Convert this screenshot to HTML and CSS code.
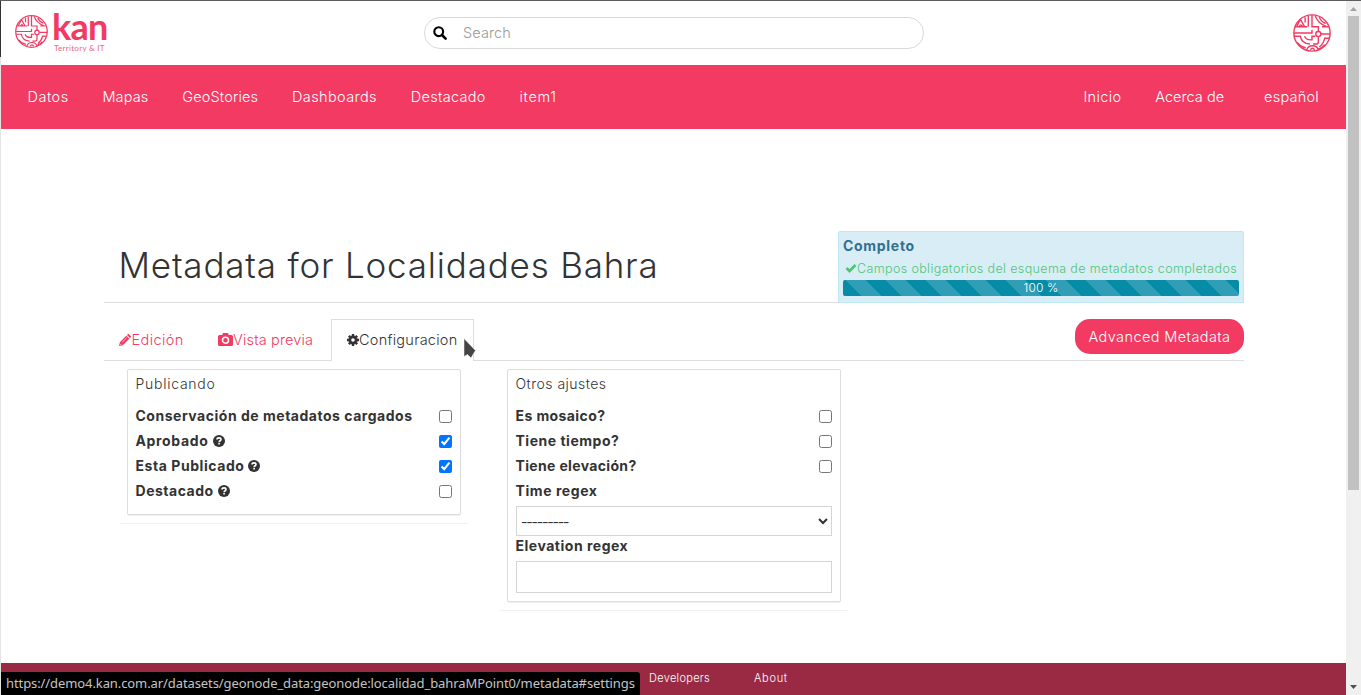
FILE: index.html
```
<!DOCTYPE html>
<html lang="es">
<head>
<meta charset="utf-8">
<title>Metadata for Localidades Bahra</title>
<link rel="stylesheet" href="styles.css">
</head>
<body>
<svg class="defs" width="0" height="0">
  <symbol id="emblem" viewBox="0 0 36 36">
    <g fill="none" stroke="#f23a62" stroke-width="1.350">
      <circle cx="18" cy="18" r="17.200"/>
      <path d="M2 12h11.500M7 5l-3.500 7M7 5l4 7M6 12q1.500-3 3 0M11.500 3v5M14.500 2v10M18 1v11h6v4.500M21 1.500q2 7 11 10.500M25 3q1 4 6 6M27.500 12h6M1 18h17v-3M1 21h6q1 7 9 7.500M4 27q3 4 8 5M11 21q1 3.500 6 3.500h1V21h3M24 21.500v5q0 2-2 2h-3M26.500 19H35M34 23h-4q-1 5-5 8M30 29q-2 3-6 4M13 34q1-4 5.500-4T24 34M16.500 34q2-3 4 0"/>
      <circle cx="24" cy="19" r="2.400" fill="#fff"/>
    </g>
  </symbol>
  <symbol id="help" viewBox="0 0 12 12">
    <circle cx="6" cy="6" r="6" fill="#333"/>
    <path d="M4 4.500C4.100 2.300 8 2.300 8 4.500 8 5.800 6.100 5.700 6.100 7.200M6.100 8.100v1.500" fill="none" stroke="#fff" stroke-width="1.600"/>
  </symbol>
</svg>
<div class="page">
  <header class="top">
    <div class="brand">
      <svg class="brand-icon"><use href="#emblem"/></svg>
      <div class="brand-text"><span class="brand-name">kan</span><span class="brand-sub">Territory &amp; IT</span></div>
    </div>
    <div class="search">
      <svg width="14" height="14" viewBox="0 0 14 14"><circle cx="5.700" cy="5.700" r="4.400" fill="none" stroke="#000" stroke-width="2.100"/><path d="M9 9l3.600 3.600" stroke="#000" stroke-width="2.600" stroke-linecap="round"/></svg>
      <span>Search</span>
    </div>
    <svg class="avatar"><use href="#emblem"/></svg>
  </header>
  <nav class="nav">
    <a class="n-datos">Datos</a><a class="n-mapas">Mapas</a><a class="n-geo">GeoStories</a><a class="n-dash">Dashboards</a><a class="n-dest">Destacado</a><a class="n-item">item1</a>
    <a class="n-inicio">Inicio</a><a class="n-acerca">Acerca de</a><a class="n-lang">español</a>
  </nav>
  <main class="container">
    <div class="heading">
      <h1>Metadata for Localidades Bahra</h1>
      <div class="status">
        <b>Completo</b>
        <div class="status-line"><svg width="12" height="10" viewBox="0 0 12 10"><path d="M1.500 5l3 3L10.500 2" fill="none" stroke="#4cc776" stroke-width="2.700"/></svg><span>Campos obligatorios del esquema de metadatos completados</span></div>
        <div class="progress">100 %</div>
      </div>
    </div>
    <div class="tabs">
      <a class="tab t-edit"><svg width="12" height="12" viewBox="0 0 12 12"><path fill="#f23a62" d="M0 12l.8-3.800L7.300 1.700l3 3L3.800 11.200zM8 1l.7-.7q.6-.6 1.200 0L11.700 2.100q.6.600 0 1.200L11 4z"/><path d="M1 9.600l1.400 1.400M3.200 8.200l4.300-4.300" stroke="#fff" stroke-width=".7"/></svg>Edición</a>
      <a class="tab t-prev"><svg width="15" height="13" viewBox="0 0 15 13"><path fill="#f23a62" d="M1.500 2h2.700l.8-2h5l.8 2h2.700q1.500 0 1.500 1.500v8q0 1.500-1.500 1.500h-12Q0 13 0 11.500v-8Q0 2 1.500 2z"/><circle cx="7.500" cy="7.200" r="3" fill="none" stroke="#fff" stroke-width="1.500"/></svg>Vista previa</a>
      <a class="tab active t-conf"><svg width="12" height="12" viewBox="0 0 12 12"><circle cx="6" cy="6" r="3.200" fill="none" stroke="#333" stroke-width="2.800"/><path d="M6 0v2M6 10v2M0 6h2M10 6h2M1.800 1.800l1.400 1.400M8.800 8.800l1.400 1.400M1.800 10.200l1.400-1.400M8.800 3.200l1.400-1.400" stroke="#333" stroke-width="2.400"/></svg>Configuracion</a>
      <a class="advanced">Advanced Metadata</a>
    </div>
    <div class="panels">
      <section class="panel"><div class="card">
        <h2 class="pub">Publicando</h2>
        <label><span>Conservación de metadatos cargados</span><input type="checkbox"></label>
        <label><span class="apr">Aprobado</span><svg class="q"><use href="#help"/></svg><input type="checkbox" checked></label>
        <label><span class="esta">Esta Publicado</span><svg class="q"><use href="#help"/></svg><input type="checkbox" checked></label>
        <label><span>Destacado</span><svg class="q"><use href="#help"/></svg><input type="checkbox"></label>
      </div></section>
      <section class="panel second"><div class="card">
        <h2 class="otros">Otros ajustes</h2>
        <label><span class="mos">Es mosaico?</span><input type="checkbox"></label>
        <label><span>Tiene tiempo?</span><input type="checkbox"></label>
        <label><span class="elev">Tiene elevación?</span><input type="checkbox"></label>
        <label><span class="time">Time regex</span></label>
        <select><option>---------</option></select>
        <label class="short"><span>Elevation regex</span></label>
        <input class="field" type="text">
      </div></section>
    </div>
  </main>
  <footer class="footer"><span class="dev">Developers</span><span class="about">About</span></footer>
</div>
<div class="scrollbar">
  <svg width="15" height="15" viewBox="0 0 15 15"><path d="M4 10h7L7.500 6z" fill="#a3a3a3"/></svg>
  <div class="thumb"></div>
  <svg class="down" width="15" height="15" viewBox="0 0 15 15"><path d="M4 5h7L7.500 9z" fill="#505050"/></svg>
</div>
<div class="url">https://demo4.kan.com.ar/datasets/geonode_data:geonode:localidad_bahraMPoint0/metadata#settings</div>
<svg class="cursor" width="14" height="22" viewBox="0 0 14 22"><path d="M1 .5v18l3.500-2 3.500 3.500 2-3.500 2.500-4z" fill="#444" stroke="#fff" stroke-width=".5"/></svg>
</body>
</html>
```
FILE: styles.css
```
* { box-sizing: border-box; }
body { margin: 0; width: 1361px; height: 695px; overflow: hidden; display: flex; border-top: 1px solid #5f5d60; font: 300 14.5px Inter, sans-serif; color: #333; background: #fff; }
.defs { position: absolute; }
.page { width: 1346px; height: 694px; display: flex; flex-direction: column; border-left: 1px solid #e4e4e4; }
.top { height: 64px; display: flex; align-items: flex-start; background: linear-gradient(#333, #333) no-repeat 0 0 / 1px 56px; margin-left: -1px; padding-left: 15px; }
.brand { display: flex; width: 409px; padding-top: 14px; }
.brand-icon { width: 33px; height: 33px; }
.brand-text { display: flex; flex-direction: column; color: #f23a62; margin-left: 4px; margin-top: -7px; }
.brand-name { font: 700 36px/36px Lato, sans-serif; letter-spacing: -.8px; height: 36px; }
.brand-sub { font: 400 8px/8px Lato, sans-serif; letter-spacing: .3px; margin: 0 0 0 2px; opacity: .8; white-space: nowrap; }
.search { width: 500px; height: 32px; margin-top: 16px; border: 1px solid #d9d9d9; border-radius: 16px; display: flex; align-items: center; padding-left: 8px; color: #999; }
.search span { margin: -2px 0 0 16px; letter-spacing: .12px; }
.avatar { width: 38px; height: 38px; margin: 13px 0 0 369px; }
.nav { height: 64px; background: #f23a62; color: #fff; display: flex; align-items: center; padding: 0 27px 2px 26.600px; gap: 33.800px; white-space: nowrap; }
.n-datos { width: 41px; letter-spacing: .46px; }
.n-mapas { width: 46px; letter-spacing: .13px; }
.n-geo { width: 76px; letter-spacing: .16px; }
.n-dash { width: 85px; letter-spacing: .39px; }
.n-dest { width: 75px; letter-spacing: .3px; }
.n-item { width: 37px; letter-spacing: .64px; }
.n-inicio { margin-left: auto; letter-spacing: .37px; }
.n-acerca { letter-spacing: .04px; }
.n-lang { letter-spacing: .25px; margin-left: 6px; }
.container { width: 1140px; margin-left: 103px; padding-top: 102px; flex: 1; }
.heading { height: 72px; border-bottom: 1px solid #ddd; display: flex; justify-content: space-between; }
h1 { margin: 12px 0 0 14.500px; font-size: 35px; font-weight: 300; line-height: 44px; letter-spacing: .8px; white-space: nowrap; }
.status { width: 406px; height: 72px; padding: 4px; background: #d9edf7; border: 1px solid #bce8f1; border-radius: 2px; color: #31708f; white-space: nowrap; }
.status b { display: block; font-size: 14px; font-weight: 700; line-height: 20px; letter-spacing: .7px; }
.status-line { display: flex; align-items: center; height: 24px; padding-left: 2px; font-size: 12.5px; letter-spacing: .379px; color: #4cc776; }
.progress { height: 16px; border-radius: 2px; background: linear-gradient(45deg, #ffffff29 25%, #0000 25%, #0000 50%, #ffffff29 50%, #ffffff29 75%, #0000 75%) 3px 0 / 40px 40px #078ca8; text-align: center; color: #fff; font-size: 12px; line-height: 16px; letter-spacing: .17px; }
.tabs { margin-top: 16px; height: 42px; border-bottom: 1px solid #ddd; display: flex; white-space: nowrap; }
.tab { height: 42px; display: flex; align-items: center; padding: 0 15px 1px; color: #f23a62; }
.t-edit { width: 98.500px; letter-spacing: .37px; }
.t-edit svg, .t-prev svg { margin-right: .6px; }
.t-prev { width: 128.500px; letter-spacing: .14px; }
.active { width: 143px; padding-bottom: 2px; border: 1px solid #ddd; border-bottom: 0; background: #fff; color: #333; letter-spacing: .26px; }
.advanced { margin-left: auto; width: 169px; height: 35px; border-radius: 15px; background: #f23a62; color: #fff; text-align: center; line-height: 35px; letter-spacing: .4px; }
.panels { display: flex; align-items: flex-start; padding-left: 16px; }
.panel { width: 348px; padding: 8px 7px; border-bottom: 1px solid #f1f1f1; border-radius: 2px; }
.second { margin-left: 32px; }
.card { border: 1px solid #ddd; border-radius: 2px; padding: 0 8px 8px; box-shadow: 0 1px 1px #0001; }
.panel:first-child .card { padding-bottom: 11px; }
h2 { margin: 0 0 5px -.5px; height: 28px; line-height: 28px; font-size: 14px; font-weight: 300; }
.pub { letter-spacing: .74px; }
.otros { letter-spacing: .47px; }
label { display: flex; align-items: center; height: 25px; margin-left: -.5px; font-size: 14px; font-weight: 700; letter-spacing: .515px; white-space: nowrap; }
label input { margin: 1px 0 0 auto; width: 13px; height: 13px; }
.q { width: 12px; height: 12px; margin-left: 4px; }
.apr { letter-spacing: .66px; }
.esta { letter-spacing: .56px; }
.mos { letter-spacing: .41px; }
.elev { letter-spacing: .34px; }
.time { letter-spacing: .57px; }
select, .field { display: block; width: 316px; border: 1px solid #d5d5d5; background: #fff; border-radius: 0; color: #333; font: 400 14px Inter, sans-serif; }
select { height: 30px; margin: 3px 0 0; padding: 0; letter-spacing: -1.2px; }
.short { height: 20px; padding-bottom: 1px; }
.field { height: 32px; margin: 5px 0 0; }
.footer { height: 32px; background: #9a2a44; color: #fff; font-size: 11px; line-height: 31px; padding-left: 648px; display: flex; }
.dev { width: 105px; letter-spacing: .3px; }
.about { letter-spacing: .7px; }
.scrollbar { width: 15px; height: 694px; background: #f0f0f0; display: flex; flex-direction: column; }
.scrollbar svg { display: block; }
.thumb { height: 474px; width: 11px; margin-left: 2px; background: #c1c1c1; }
.down { margin-top: auto; }
.url { position: absolute; left: 1px; top: 672px; width: 639px; height: 23px; border-radius: 0 3px 0 0; background: #000; color: #c4c4c4; font: 400 13px/23px "Noto Sans", sans-serif; letter-spacing: -.09px; padding-left: 5px; white-space: nowrap; }
.cursor { position: absolute; left: 463px; top: 338px; }
```
